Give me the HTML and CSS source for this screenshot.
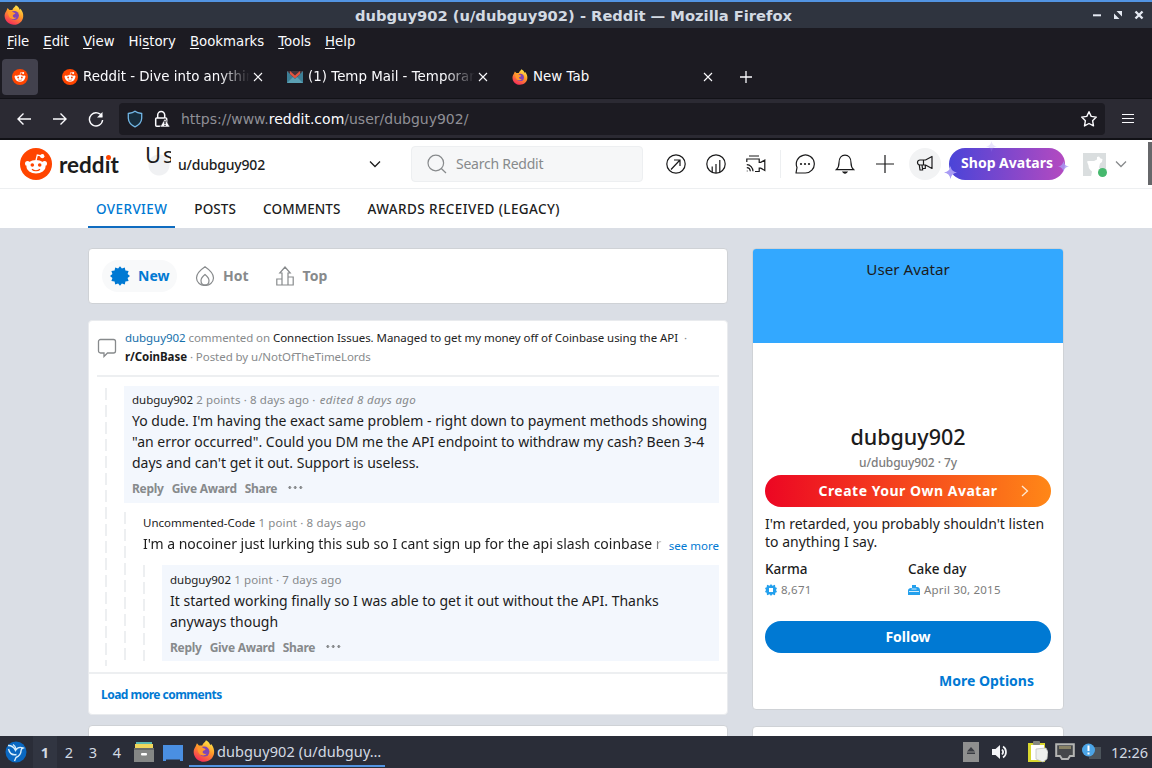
FILE: index.html
```html
<!DOCTYPE html>
<html lang="en">
<head>
  <meta charset="utf-8">
  <title>dubguy902 (u/dubguy902) - Reddit</title>
  <link rel="stylesheet" href="styles.css">
</head>
<body>
  <svg class="defs" width="0" height="0">
    <defs>
      <linearGradient id="flame" x1="0.8" y1="0" x2="0.3" y2="1">
        <stop offset="0" stop-color="#fff14f"/>
        <stop offset="0.45" stop-color="#ff9a28"/>
        <stop offset="1" stop-color="#f5275c"/>
      </linearGradient>
      <symbol id="firefox" viewBox="0 0 20 20">
        <path fill="url(#flame)" d="M2.2 6.2 3.6 3l1.8 2.1 3-.2C9 3 11 2.200 11.800.3c2.700 1.500 3.500 3 3.800 4.400l.9-1c2 2.500 3 5 2.700 8C18.700 16.500 14.900 19.800 10 19.800S.8 16.200.6 11.100c0-1.900.6-3.600 1.600-4.900z"/>
        <circle cx="10.300" cy="10.500" r="4.600" fill="#8045b5"/>
        <path fill="#ff982d" d="M4 7c2-1.400 4.400-.8 5.700.6 1 .2 1.700.5 1.700 1-.6 1-2 .7-2.600 1.800-.4 1.400 1.300 2.800 3.600 2.200-1.700 2.300-5.600 2-7-.5C4.600 10.700 4 9 4 7z"/>
      </symbol>
      <symbol id="snoo" viewBox="0 0 32 32">
        <circle cx="16" cy="16" r="16" fill="#ff4500"/>
        <path d="M16 12.500 17.300 7l4 .9" fill="none" stroke="#fff" stroke-width="1.300"/>
        <circle cx="22.300" cy="8.200" r="2.100" fill="#fff"/>
        <circle cx="7.500" cy="15.500" r="2.500" fill="#fff"/>
        <circle cx="24.500" cy="15.500" r="2.500" fill="#fff"/>
        <ellipse cx="16" cy="18.700" rx="9.600" ry="6.700" fill="#fff"/>
        <circle cx="12.300" cy="17" r="1.800" fill="#ff4500"/>
        <circle cx="19.700" cy="17" r="1.800" fill="#ff4500"/>
        <path d="M12 21.300c2 1.900 6 1.900 8 0" fill="none" stroke="#ff4500" stroke-width="1.200"/>
      </symbol>
      <symbol id="close" viewBox="0 0 10 10">
        <path d="M1 1l8 8M9 1l-8 8" stroke="currentColor" stroke-width="1.100"/>
      </symbol>
      <symbol id="chevron" viewBox="0 0 12 8">
        <path d="M1 1.500l5 5 5-5" fill="none" stroke="currentColor" stroke-width="1.300"/>
      </symbol>
      <symbol id="sparkle" viewBox="0 0 12 12">
        <path d="M6 0q.8 5.200 6 6-5.200.8-6 6-.8-5.200-6-6 5.200-.8 6-6z" fill="currentColor"/>
      </symbol>
    </defs>
  </svg>

  <div class="titlebar">
    <svg class="app-icon" width="20" height="20"><use href="#firefox"/></svg>
    <span class="window-title">dubguy902 (u/dubguy902) - Reddit — Mozilla Firefox</span>
    <svg class="window-buttons" width="56" height="12" viewBox="0 0 56 12">
      <path d="M1 6.300h8" stroke="#e4e9f2" stroke-width="2"/>
      <path d="M24.500 2h5.500v5.500zM22 4.500v5.500h5.500z" fill="#e4e9f2"/>
      <path d="M43.500 2.500l7 7M50.500 2.500l-7 7" stroke="#e4e9f2" stroke-width="2.400"/>
    </svg>
  </div>

  <div class="menubar">
    <span><u>F</u>ile</span>
    <span><u>E</u>dit</span>
    <span><u>V</u>iew</span>
    <span>Hi<u>s</u>tory</span>
    <span><u>B</u>ookmarks</span>
    <span><u>T</u>ools</span>
    <span><u>H</u>elp</span>
  </div>

  <div class="tabs">
    <div class="tab-pinned"><svg width="16" height="16"><use href="#snoo"/></svg></div>
    <div class="tab">
      <svg width="16" height="16"><use href="#snoo"/></svg>
      <span class="tab-label tab-fade">Reddit - Dive into anything</span>
      <svg width="10" height="10"><use href="#close"/></svg>
    </div>
    <div class="tab">
      <svg width="16" height="16" viewBox="0 0 16 16">
        <path d="M0 2h16v12H0z" fill="#3d7f96"/>
        <path d="M0 2h16L8 10z" fill="#46353b"/>
        <path d="M3 2l5 4.500L13 2v3L8 9.500 3 5z" fill="#e4553f"/>
        <path d="M0 14l6-6 2 2 2-2 6 6z" fill="#5ba0b3"/>
      </svg>
      <span class="tab-label tab-fade">(1) Temp Mail - Temporary</span>
      <svg width="10" height="10"><use href="#close"/></svg>
    </div>
    <div class="tab">
      <svg width="16" height="16"><use href="#firefox"/></svg>
      <span class="tab-label">New Tab</span>
      <svg width="10" height="10"><use href="#close"/></svg>
    </div>
    <svg class="tab-new" width="12" height="12" viewBox="0 0 12 12"><path d="M6 0v12M0 6h12" stroke="#fbfbfe" stroke-width="1.300"/></svg>
  </div>

  <div class="navbar">
    <svg class="nav-icon" width="16" height="16" viewBox="0 0 16 16"><path d="M15 8H2M7.500 2.500L2 8l5.500 5.500"/></svg>
    <svg class="nav-icon" width="16" height="16" viewBox="0 0 16 16"><path d="M1 8h13M8.500 2.500L14 8l-5.500 5.500"/></svg>
    <svg class="nav-icon" width="16" height="16" viewBox="0 0 16 16"><path d="M14 5.500A6.600 6.600 0 1 0 14.600 9"/><path d="M14.500 1v5.500H9z" fill="#fbfbfe" stroke="none"/></svg>
    <div class="urlbar">
      <svg width="16" height="18" viewBox="0 0 16 18"><path d="M8 1.200C6.500 2.500 4 3.200 1.300 3.500v4.800C1.500 12.500 5 15.500 8 16.800c3-1.300 6.500-4.300 6.700-8.500V3.500C12 3.200 9.500 2.500 8 1.200z" fill="#172d3d" stroke="#71b6e5" stroke-width="1.300"/></svg>
      <svg width="16" height="18" viewBox="0 0 16 18">
        <rect x="1.700" y="8" width="11" height="8.300" rx="1" fill="none" stroke="#fbfbfe" stroke-width="1.500"/>
        <path d="M3.700 8V5a3.500 3.500 0 0 1 7 0v3" fill="none" stroke="#fbfbfe" stroke-width="1.500"/>
        <path d="M11 8.500l5 8.500H6z" fill="#fbfbfe" stroke="#1c1b22" stroke-width="0.600"/>
        <path d="M11 11v3M11 14.700v1.300" stroke="#1c1b22" stroke-width="1.300"/>
      </svg>
      <span class="url">https://www.<b>reddit.com</b>/user/dubguy902/</span>
      <svg class="star" width="18" height="18" viewBox="0 0 18 18"><path d="M9 1.700l2.200 4.700 5.100.7-3.700 3.600.9 5.200L9 13.500l-4.500 2.400.9-5.200L1.700 7.100l5.100-.7z" fill="none" stroke="#fbfbfe" stroke-width="1.400" stroke-linejoin="round"/></svg>
    </div>
    <svg class="hamburger" width="12" height="12" viewBox="0 0 12 12"><path d="M0 1.500h12M0 5.500h12M0 9.500h12" stroke="#fbfbfe" stroke-width="1.200"/></svg>
  </div>

  <header class="header">
    <svg width="32" height="32"><use href="#snoo"/></svg>
    <span class="wordmark">redd<span class="wordmark-i">ı</span>t</span>
    <span class="alt-avatar">Us</span>
    <span class="community">u/dubguy902</span>
    <svg class="community-arrow" width="12" height="8"><use href="#chevron"/></svg>
    <div class="search">
      <svg width="20" height="20" viewBox="0 0 20 20" fill="none" stroke="#878a8c" stroke-width="1.200"><circle cx="8.800" cy="9" r="7.800"/><path d="M14.300 14.500l4.700 4.500"/></svg>
      <span>Search Reddit</span>
    </div>
    <div class="actions">
      <svg viewBox="0 0 20 20"><circle cx="10" cy="10" r="9.200"/><path d="M5 15.500l8.500-9M8 6h6v6"/></svg>
      <svg viewBox="0 0 20 20"><circle cx="10" cy="10" r="9.200"/><path d="M6.200 18v-5.500M10 19v-9M13.800 18V6"/></svg>
      <svg viewBox="0 0 20 20"><path d="M3 2h10M.8 8V5h12.400v3.300h1.600l4-2.300v10.500l-4-2.300h-1.600v3.300H9M.8 17h.8M.8 13.700c2 0 3.300 1.500 3.500 3.600M.8 10.700c3.500 0 6 3 6.200 6.600"/></svg>
      <span class="divider"></span>
      <svg viewBox="0 0 20 20"><path d="M1 19l1-5.500A9 9 0 1 1 10 19z" stroke-linejoin="round"/><g fill="#1a1a1b" stroke="none"><circle cx="6" cy="10" r="1.100"/><circle cx="10" cy="10" r="1.100"/><circle cx="14" cy="10" r="1.100"/></g></svg>
      <svg viewBox="0 0 20 20"><path d="M1.300 15.700c2.200-2 2.700-3.600 2.700-7C4 4 6.500 1.200 10 1.200S16 4 16 8.700c0 3.400.5 5 2.700 7z"/><path d="M8 18c1 1.600 3 1.600 4 0z" fill="#1a1a1b"/></svg>
      <svg viewBox="0 0 20 20"><path d="M10 1v18M1 10h18"/></svg>
      <span class="promo"><svg viewBox="0 0 20 20"><path d="M10.500 6l6.500-3.500v12L10.500 11H5a2.500 2.500 0 0 1 0-5zM8.500 6v5M4.300 11l.7 5h2.700L7 11M8 14.500h2.300V11" stroke-linejoin="round"/></svg></span>
    </div>
    <div class="shop">
      Shop Avatars
      <svg class="spark spark-left" width="13" height="13"><use href="#sparkle"/></svg>
      <svg class="spark spark-top" width="11" height="11"><use href="#sparkle"/></svg>
      <svg class="spark spark-right" width="11" height="11"><use href="#sparkle"/></svg>
    </div>
    <div class="account">
      <svg width="23" height="23" viewBox="0 0 23 23"><rect width="23" height="23" fill="#dadedf"/><path d="M4 8.500c2-.8 4-.3 7-.5l3-1.500V4l2-.5 1.500 2 2 .5-.5 3-2 1.500-1 4 2 3-1 6H8l1-5c-2-1.500-3.500-3-3.500-6z" fill="#fff"/></svg>
      <span class="online"></span>
    </div>
    <svg class="account-arrow" width="12" height="8"><use href="#chevron"/></svg>
    <span class="scroll-thumb"></span>
  </header>

  <nav class="profile-nav">
    <a class="active">OVERVIEW</a>
    <a>POSTS</a>
    <a>COMMENTS</a>
    <a>AWARDS RECEIVED (LEGACY)</a>
  </nav>

  <main class="content">
    <div class="feed">
      <div class="card sort">
        <span class="sort-item sort-active">
          <svg width="20" height="20" viewBox="0 0 20 20"><path fill="#0079d3" d="M10 .3l1.900 2.300 2.900-1.200.6 3 3.200.6-1 2.900L20 10l-2.400 2.100 1 2.900-3.200.6-.6 3-2.900-1.200L10 19.700l-1.900-2.300-2.900 1.200-.6-3-3.200-.6 1-2.900L0 10l2.400-2.100-1-2.900 3.200-.6.6-3 2.900 1.200z"/></svg>
          New
        </span>
        <span class="sort-item sort-hot">
          <svg width="20" height="20" viewBox="0 0 20 20" fill="none" stroke="#878a8c" stroke-width="1.200"><path d="M10 .8C6 3.500 1.500 7.500 1.500 12A7.500 7.500 0 0 0 10 19.200 7.500 7.500 0 0 0 18.500 12C18.500 7.500 14 3.500 10 .8z"/><path d="M10 8.500c-2.500 2-4 4-4 6 0 3 2 4.500 4 4.500s4-1.500 4-4.500c0-2-1.500-4-4-6z"/></svg>
          Hot
        </span>
        <span class="sort-item sort-top">
          <svg width="20" height="20" viewBox="0 0 20 20" fill="none" stroke="#878a8c" stroke-width="1.200"><path d="M7 19V7H4.800L10 1l5.200 6H13v12M7 13H1.800v6h16.400v-8H13"/></svg>
          Top
        </span>
      </div>

      <div class="card post">
        <div class="post-head">
          <svg width="20" height="20" viewBox="0 0 20 20"><path d="M3.500 1.500h13a2 2 0 0 1 2 2v9.500a2 2 0 0 1-2 2h-6L7 18.500V15H3.500a2 2 0 0 1-2-2V3.500a2 2 0 0 1 2-2z" fill="none" stroke="#878a8c" stroke-width="1.300"/></svg>
          <div class="post-meta">
            <p><a class="user-link">dubguy902</a> commented on <span class="post-title">Connection Issues. Managed to get my money off of Coinbase using the API</span> &nbsp;·</p>
            <p><b class="subreddit">r/CoinBase</b> · Posted by u/NotOfTheTimeLords</p>
          </div>
        </div>
        <div class="thread">
          <div class="comment highlight">
            <p class="meta"><span class="author">dubguy902</span> 2 points · 8 days ago · <i>edited 8 days ago</i></p>
            <p class="text">Yo dude. I'm having the exact same problem - right down to payment methods showing<br>"an error occurred". Could you DM me the API endpoint to withdraw my cash? Been 3-4<br>days and can't get it out. Support is useless.</p>
            <div class="comment-actions"><span>Reply</span><span>Give Award</span><span>Share</span><span class="dots"></span></div>
          </div>
          <div class="replies">
            <div class="comment single">
              <p class="meta"><span class="author">Uncommented-Code</span> 1 point · 8 days ago</p>
              <div class="clipped"><p class="text">I'm a nocoiner just lurking this sub so I cant sign up for the api slash coinbase r</p><a>see more</a></div>
            </div>
            <div class="replies nested">
              <div class="comment highlight">
                <p class="meta"><span class="author">dubguy902</span> 1 point · 7 days ago</p>
                <p class="text">It started working finally so I was able to get it out without the API. Thanks<br>anyways though</p>
                <div class="comment-actions"><span>Reply</span><span>Give Award</span><span>Share</span><span class="dots"></span></div>
              </div>
            </div>
          </div>
        </div>
        <div class="load-more">Load more comments</div>
      </div>
      <div class="card next-card"></div>
    </div>

    <aside class="sidebar">
      <div class="card profile">
        <div class="banner">User Avatar</div>
        <h1>dubguy902</h1>
        <p class="handle">u/dubguy902 · 7y</p>
        <div class="button create">Create Your Own Avatar
          <svg width="8" height="12" viewBox="0 0 8 12"><path d="M1 1l5.500 5L1 11" fill="none" stroke="#ffe9d2" stroke-width="1.300"/></svg>
        </div>
        <p class="bio">I'm retarded, you probably shouldn't listen<br>to anything I say.</p>
        <div class="stats">
          <div>
            <h2>Karma</h2>
            <p><svg width="12" height="12" viewBox="0 0 12 12"><path d="M6 0l1.300 1.800L10 .8l.3 2.500L12 4l-1 2 1 2-1.700.7-.3 2.500-2.700-1L6 12l-1.300-1.800-2.700 1-.3-2.500L0 8l1-2-1-2 1.700-.7L2 .8l2.700 1z" fill="#24a0ed"/><path d="M4 4h4v4H4z" fill="#fff"/></svg>8,671</p>
          </div>
          <div>
            <h2>Cake day</h2>
            <p><svg width="12" height="12" viewBox="0 0 12 12"><path d="M0 11V6.500C0 5 1.500 4 3 4h1V1h4v2h1c2 0 3 1.500 3 3.500V11z" fill="#24a0ed"/><path d="M1 7.500h10M3.500 5h5" fill="none" stroke="#fff" stroke-width="0.800"/></svg>April 30, 2015</p>
          </div>
        </div>
        <div class="button follow">Follow</div>
        <a class="more">More Options</a>
      </div>
      <div class="card next-card"></div>
    </aside>
  </main>

  <footer class="taskbar">
    <svg width="22" height="22" viewBox="0 0 22 22"><circle cx="11" cy="11" r="10.500" fill="#0a68c1"/><path d="M3 4.500c4 0 6 1.500 7.500 5C12 7 14.500 5.500 18 7c-1.500.5-2 1.500-2 3 0 3-2 5-5 6.500L9.500 20M3.500 8c1 4 3.500 6.500 8 5.500M8 3.500c1.500 1 3 3 3.300 5" fill="none" stroke="#d9eefb" stroke-width="1.400"/></svg>
    <div class="desktops"><b>1</b><span>2</span><span>3</span><span>4</span></div>
    <svg width="20" height="20" viewBox="0 0 20 20"><path d="M2 0h16v4H2z" fill="#5bb9b0"/><path d="M1 2h18v4H1z" fill="#f0d75b"/><path d="M0 6h20v14H0z" fill="#858786"/><path d="M0 6h20v2H0z" fill="#686b69"/><rect x="7" y="11" width="6" height="2.500" rx="1" fill="#fff"/></svg>
    <svg class="desktop-icon" width="20" height="17" viewBox="0 0 20 17"><path d="M0 0h20v16h-3v-1.500H3V16H0z" fill="#4a8fe2"/></svg>
    <div class="task"><svg width="22" height="22"><use href="#firefox"/></svg><span>dubguy902 (u/dubguy…</span></div>
    <div class="tray">
      <svg width="16" height="20" viewBox="0 0 16 20"><path d="M0 0h16v20H0z" fill="#8f8f8f"/><path d="M8 5l4 4.500H4zM4 10.500h8v1.500H4z" fill="#3a3c43"/></svg>
      <svg class="volume" width="18" height="18" viewBox="0 0 18 18"><path d="M1 6h3.500L9 2v14l-4.500-4H1z" fill="#f4f5f8"/><path d="M11 6.500c1.300 1.400 1.300 3.600 0 5M12 3.500c4 2.500 4 8.500 0 11" fill="none" stroke="#f4f5f8" stroke-width="1.700"/></svg>
      <svg class="clipboard" width="20" height="22" viewBox="0 0 20 22"><path d="M0 2h17v19H0z" fill="#d8d62e"/><path d="M3 4h13v15H3z" fill="#fff"/><rect x="5" y="0" width="7" height="4" rx="1" fill="#85877f"/><path d="M8 8l10-1 2 4-1 7-4 3-7-3z" fill="#eef0ee" stroke="#b9bcb8" stroke-width="0.700"/></svg>
      <svg class="network" width="20" height="18" viewBox="0 0 20 18"><path d="M1.200 1.200h17.600V13H15l-2 3H7l-2-3H1.200z" fill="#45474a" stroke="#b4b5b3" stroke-width="2"/><path d="M5 3v3M7 3v3M9 3v3M11 3v3M13 3v3M15 3v3" stroke="#cdbf82"/></svg>
      <svg class="notice" width="20" height="18" viewBox="0 0 20 18"><path d="M7 4h12v12H7z" fill="#4c545b"/><circle cx="6.500" cy="7" r="6.500" fill="#4ba4e6"/><path d="M6.500 2.500v5.500M6.500 9.500v2" stroke="#fff" stroke-width="2"/></svg>
      <span class="clock">12:26</span>
    </div>
  </footer>
</body>
</html>
```
FILE: styles.css
```css
* {
  box-sizing: border-box;
}
body {
  margin: 0;
  width: 1152px;
  height: 768px;
  overflow: hidden;
  display: flex;
  flex-direction: column;
  font-family: "Noto Sans", sans-serif;
  color: #1c1c1c;
  background: #dadee5;
}
p, h1, h2 {
  margin: 0;
}
svg {
  flex: none;
  display: block;
}
.defs {
  position: absolute;
}

/* window chrome */
.titlebar {
  height: 28px;
  flex: none;
  display: flex;
  align-items: center;
  padding: 0 4px;
  background: #2f343f;
  border-top: 2px solid #5294e2;
}
.window-title {
  flex: 1;
  text-align: center;
  padding-left: 31px;
  font: bold 14.7px "DejaVu Sans", sans-serif;
  color: #d3dae3;
}
.menubar {
  height: 26px;
  flex: none;
  display: flex;
  align-items: center;
  gap: 14px;
  padding-left: 7px;
  background: #1c1b22;
  color: #fbfbfe;
  font: 13.3px "DejaVu Sans", sans-serif;
}
.menubar u {
  text-underline-offset: 2px;
}
.tabs {
  height: 44px;
  flex: none;
  display: flex;
  align-items: center;
  padding-top: 1px;
  padding-left: 2px;
  background: #1c1b22;
  color: #fbfbfe;
  font: 13.4px "DejaVu Sans", sans-serif;
}
.tab-pinned {
  width: 36px;
  height: 36px;
  display: grid;
  place-items: center;
  border-radius: 4px;
  background: #42414d;
}
.tab {
  width: 225px;
  padding-left: 24px;
  display: flex;
  align-items: center;
}
.tab-label {
  flex: 1;
  margin: 0 3px 0 5px;
  white-space: nowrap;
  overflow: hidden;
}
.tab-fade {
  mask-image: linear-gradient(to left, transparent, #000 30px);
}
.tab-new {
  margin-left: 27px;
}
.navbar {
  height: 42px;
  flex: none;
  display: flex;
  align-items: center;
  padding-left: 16px;
  background: #2b2a33;
  border-top: 1px solid #121217;
  border-bottom: 2px solid #111116;
}
.nav-icon {
  margin-right: 20px;
  fill: none;
  stroke: #fbfbfe;
  stroke-width: 1.400;
}
.urlbar {
  width: 986px;
  height: 32px;
  margin-left: -5px;
  padding: 0 7px 0 8px;
  display: flex;
  align-items: center;
  gap: 11px;
  border-radius: 4px;
  background: #1c1b22;
}
.url {
  font: 14px "DejaVu Sans", sans-serif;
  color: #8f8f96;
}
.url b {
  font-weight: normal;
  color: #fbfbfe;
}
.star {
  margin-left: auto;
}
.hamburger {
  margin-left: 17px;
}

/* site header */
.header {
  position: relative;
  height: 49px;
  flex: none;
  display: flex;
  align-items: center;
  padding-left: 20px;
  background: #fff;
  border-bottom: 1px solid #edeff1;
}
.wordmark {
  width: 88px;
  padding-left: 7px;
  font: bold 22.5px Lato, sans-serif;
}
.wordmark-i {
  position: relative;
}
.wordmark-i::before {
  content: "";
  position: absolute;
  top: 4px;
  left: 1px;
  width: 5px;
  height: 5px;
  border-radius: 50%;
  background: #ff4500;
}
.alt-avatar {
  width: 26px;
  height: 30px;
  margin-left: 5px;
  margin-bottom: 6px;
  overflow: hidden;
  font-size: 22px;
  line-height: 16px;
  letter-spacing: 2px;
  background: radial-gradient(circle at 14px 19px, #f0f1f3 10px, transparent 11px);
}
.community {
  width: 191px;
  padding-left: 7px;
  font-size: 14px;
  font-weight: 500;
  letter-spacing: -0.2px;
}
.community-arrow {
  margin-left: 7px;
}
.search {
  width: 232px;
  height: 36px;
  margin-left: 30px;
  padding-left: 15px;
  display: flex;
  align-items: center;
  gap: 9px;
  border: 1px solid #edeff1;
  border-radius: 4px;
  background: #f6f7f8;
  color: #878a8c;
  font-size: 14px;
  line-height: 18px;
  letter-spacing: -0.25px;
}
.search span {
  padding-bottom: 1px;
}
.actions {
  display: flex;
  align-items: center;
  gap: 20px;
  margin-left: 23px;
}
.actions svg {
  width: 20px;
  height: 20px;
  fill: none;
  stroke: #1a1a1b;
  stroke-width: 1.200;
}
.divider {
  width: 1px;
  height: 28px;
  margin: 0 -6px;
  background: #edeff1;
}
.promo {
  width: 32px;
  height: 32px;
  margin-left: -6px;
  display: grid;
  place-items: center;
  border-radius: 50%;
  background: #f2f3f4;
}
.shop {
  position: relative;
  width: 116px;
  height: 32px;
  margin-left: 8px;
  border-radius: 16px;
  background: linear-gradient(90deg, #4a44d8, #b44ac0);
  color: #fff;
  font-size: 14px;
  font-weight: 700;
  line-height: 30px;
  text-align: center;
}
.spark {
  position: absolute;
  color: #a99cf4;
}
.spark-left {
  left: -5px;
  top: 18px;
}
.spark-top {
  left: 37px;
  top: -7px;
  opacity: 0.25;
}
.spark-right {
  right: -4px;
  top: 13px;
  opacity: 0.8;
}
.account {
  position: relative;
  margin-left: 18px;
}
.online {
  position: absolute;
  right: -1px;
  bottom: -1px;
  width: 9px;
  height: 9px;
  border-radius: 50%;
  background: #46b96e;
}
.account-arrow {
  margin-left: 9px;
  color: #878a8c;
}
.scroll-thumb {
  position: absolute;
  right: 0;
  top: 2px;
  width: 4px;
  height: 43px;
  background: #66676a;
}
.profile-nav {
  height: 39px;
  flex: none;
  display: flex;
  gap: 11px;
  padding-left: 88px;
  background: #fff;
  font-size: 13.5px;
  font-weight: 500;
  line-height: 40px;
}
.profile-nav a {
  padding: 0 8px;
  letter-spacing: 0.1px;
}
.profile-nav a:last-child {
  letter-spacing: 0.4px;
}
.profile-nav .active {
  color: #0079d3;
  letter-spacing: 0.4px;
  border-bottom: 2px solid #0f6cc0;
}

/* page body */
.content {
  flex: 1;
  min-height: 0;
  overflow: hidden;
  display: flex;
  gap: 24px;
  padding: 20px 88px 0;
}
.card {
  background: #fff;
  border: 1px solid #cfd2d6;
  border-radius: 4px;
}
.feed {
  width: 640px;
}
.sort {
  height: 56px;
  display: flex;
  align-items: center;
  padding-bottom: 1px;
  padding-left: 13px;
  font-size: 14px;
  font-weight: 700;
  color: #878a8c;
}
.sort-item {
  height: 32px;
  display: flex;
  align-items: center;
  gap: 8px;
}
.sort-active {
  width: 75px;
  padding-left: 8px;
  border-radius: 16px;
  background: #f8f9fa;
  color: #0079d3;
}
.sort-hot {
  margin-left: 18px;
}
.sort-top {
  margin-left: 26px;
}
.post {
  height: 395px;
  margin-top: 16px;
  border-color: #e9ebee;
}
.post-head {
  height: 56px;
  margin: 0 8px;
  padding-top: 7px;
  display: flex;
  gap: 8px;
  border-bottom: 2px solid #edeff1;
}
.post-head svg {
  margin-top: 10px;
}
.post-meta {
  color: #878a8c;
  font-size: 11.5px;
  line-height: 19px;
  letter-spacing: -0.06px;
  white-space: nowrap;
}
.user-link {
  color: #1670ab;
}
.post-title {
  color: #222;
}
.subreddit {
  color: #1c1c1c;
}
.thread {
  height: 295px;
  padding-top: 9px;
  padding-left: 19px;
  margin-left: 16px;
  margin-right: 8px;
  background: repeating-linear-gradient(#edeff1 0 12px, transparent 12px 17px) 0 11px / 2px 278px no-repeat;
}
.highlight {
  background: #f3f7fd;
}
.comment {
  height: 117px;
  padding: 5px 8px 0;
}
.meta {
  color: #878a8c;
  font-size: 11.5px;
  line-height: 18px;
  letter-spacing: 0.13px;
}
.meta i {
  margin-left: 1px;
  letter-spacing: 0.38px;
}
.author {
  color: #1c1c1c;
  letter-spacing: 0;
}
.text {
  margin-top: 1px;
  font-size: 14px;
  line-height: 21px;
}
.comment-actions {
  display: flex;
  align-items: center;
  gap: 8px;
  color: #878a8c;
  font-size: 12px;
  font-weight: 700;
  line-height: 16px;
  letter-spacing: -0.28px;
  margin-top: 8px;
}
.dots {
  width: 16px;
  height: 4px;
  margin-left: 2px;
  margin-bottom: 2px;
  background: radial-gradient(circle, #878a8c 1.200px, transparent 1.700px) 0 0 / 5.500px 3px repeat-x;
}
.replies {
  margin-top: 9px;
  padding-left: 19px;
  background: repeating-linear-gradient(#edeff1 0 12px, transparent 12px 17px) 0 0 / 2px 100% no-repeat;
}
.single {
  height: 47px;
  padding: 2px 0 0;
}
.clipped {
  display: flex;
  align-items: center;
}
.clipped .text {
  width: 520px;
  white-space: nowrap;
  overflow: hidden;
  mask-image: linear-gradient(to left, transparent, #000 10px);
}
.clipped a {
  margin-left: auto;
  padding-top: 4px;
  font-size: 11.5px;
  line-height: 17px;
  white-space: nowrap;
  color: #0079d3;
}
.nested {
  margin-top: 6px;
}
.nested .comment {
  height: 96px;
  padding-top: 6px;
}
.load-more {
  height: 42px;
  padding-left: 12px;
  border-top: 2px solid #edeff1;
  color: #0079d3;
  font-size: 12px;
  font-weight: 700;
  line-height: 42px;
  letter-spacing: -0.52px;
}
.next-card {
  height: 40px;
  margin-top: 10px;
}

/* profile sidebar */
.sidebar {
  width: 312px;
}
.sidebar .next-card {
  margin-top: 16px;
}
.profile {
  height: 462px;
  padding: 0 12px;
  display: flex;
  flex-direction: column;
}
.banner {
  height: 94px;
  flex: none;
  margin: 0 -12px;
  border-radius: 3px 3px 0 0;
  background: #33a8ff;
  font-size: 15.200px;
  line-height: 41px;
  text-align: center;
}
.profile h1 {
  margin-top: 79px;
  font-size: 21.500px;
  font-weight: 500;
  line-height: 30px;
  text-align: center;
}
.handle {
  color: #7c7c7c;
  font-size: 12px;
  font-weight: 500;
  line-height: 20px;
  letter-spacing: -0.08px;
  text-align: center;
  margin-top: 1px;
  margin-bottom: 2px;
}
.button {
  position: relative;
  height: 32px;
  flex: none;
  border-radius: 16px;
  color: #fff;
  font-size: 14px;
  font-weight: 700;
  line-height: 32px;
  text-align: center;
}
.create {
  letter-spacing: 0.5px;
  background: linear-gradient(90deg, #ec0623, #ff8717);
}
.create svg {
  position: absolute;
  right: 22px;
  top: 10px;
}
.bio {
  margin-top: 8px;
  font-size: 14px;
  line-height: 18px;
}
.stats {
  display: grid;
  grid-template-columns: 1fr 1fr;
  margin-top: 9px;
}
.stats h2 {
  font-size: 13.5px;
  font-weight: 500;
  line-height: 18px;
}
.stats p {
  display: flex;
  align-items: center;
  gap: 4px;
  margin-top: 4px;
  color: #7c7c7c;
  font-size: 11.5px;
  line-height: 16px;
  letter-spacing: 0.22px;
}
.follow {
  margin-top: 23px;
  background: #0079d3;
}
.more {
  margin: 17px 17px 0;
  color: #0079d3;
  font-size: 14px;
  font-weight: 700;
  line-height: 22px;
  text-align: right;
}

/* desktop panel */
.taskbar {
  height: 32px;
  flex: none;
  display: flex;
  align-items: center;
  padding-left: 5px;
  background: #2a2d38;
  color: #d3dae3;
  font-size: 14.500px;
}
.desktops {
  display: flex;
  margin: 0 5px 0 6px;
}
.desktops > * {
  width: 24px;
  line-height: 32px;
  text-align: center;
}
.desktops b {
  background: #313541;
}
.desktop-icon {
  margin: 2px 6px 0 9px;
}
.task {
  width: 196px;
  height: 30px;
  padding-left: 4px;
  display: flex;
  align-items: center;
  gap: 2px;
  white-space: nowrap;
  letter-spacing: 0.1px;
  border-bottom: 2px solid #5294e2;
}
.tray {
  margin-left: auto;
  padding-right: 4px;
  display: flex;
  align-items: center;
}
.volume {
  margin: 0 19px 0 12px;
}
.network {
  margin: 0 7px;
}
.clock {
  margin-left: 9px;
}
```
